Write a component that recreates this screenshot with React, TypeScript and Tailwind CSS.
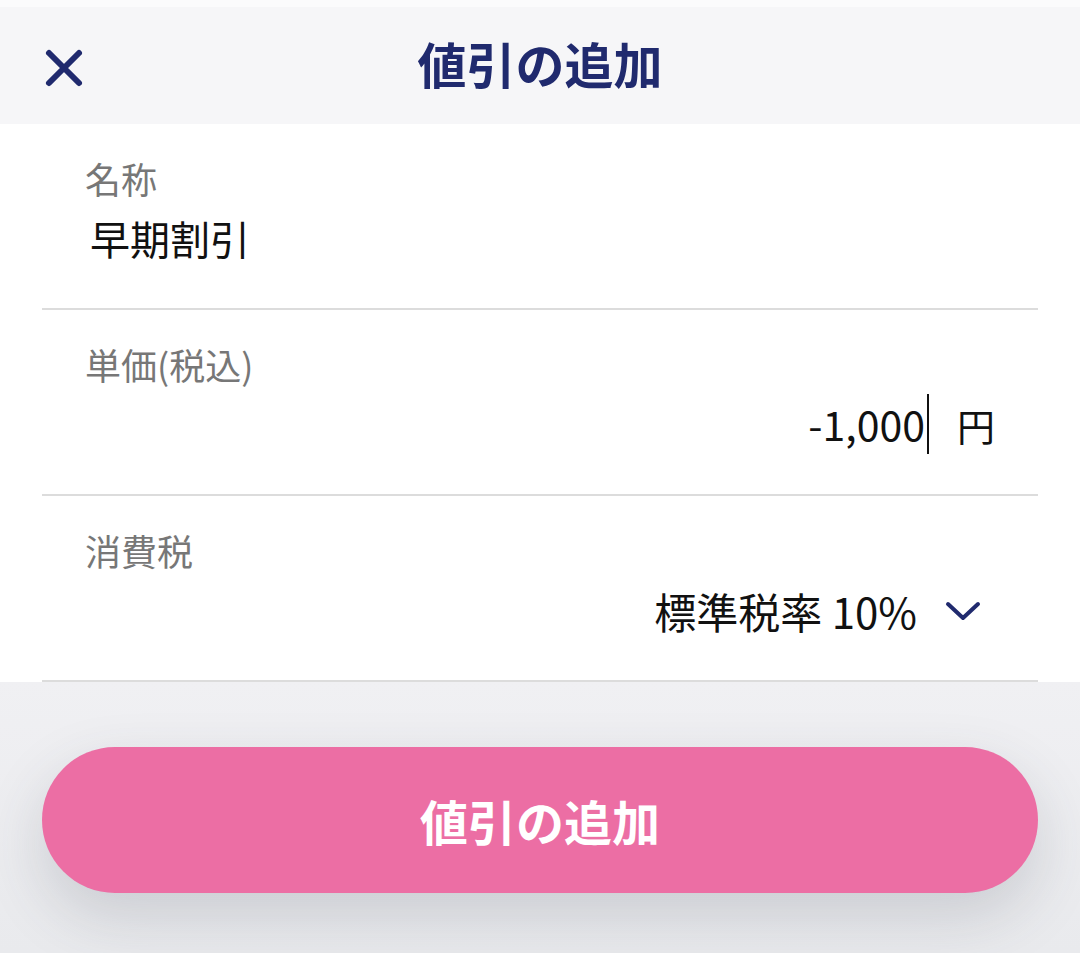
import React from 'react';

const font = { fontFamily: '"Noto Sans CJK JP", "Noto Sans", sans-serif' };

function Row({ label, children }: { label: string; children: React.ReactNode }) {
  return (
    <div className="h-[186px] border-b-2 border-[#dcdcdc] flex flex-col px-[43px] pt-[30px]">
      <div className="text-[36px] leading-[48px] text-[#777777]">{label}</div>
      <div className="mt-[8px] h-[56px] flex items-center">{children}</div>
    </div>
  );
}

export default function App() {
  return (
    <div className="w-[1080px] h-[953px] flex flex-col bg-white overflow-hidden" style={font}>
      <div className="h-[7px] bg-[#fbfbfc]" />
      <header className="h-[117px] bg-[#f6f6f8] flex items-center relative">
        <button className="absolute left-[44px] top-[41px] w-[40px] h-[40px] text-[#202a6e]">
          <svg viewBox="0 0 40 40" className="w-[40px] h-[40px]" fill="none" stroke="currentColor" strokeWidth="6" strokeLinecap="round">
            <path d="M5 5 L35 35 M35 5 L5 35" />
          </svg>
        </button>
        <h1 className="w-full text-center text-[49px] leading-none font-bold text-[#202a6e] pb-[6px]">値引の追加</h1>
      </header>

      <div className="bg-white px-[42px]">
        <Row label="名称">
          <span className="pl-[5px] text-[40px] text-[#111111]">早期割引</span>
        </Row>
        <Row label="単価(税込)">
          <div className="flex-1 flex items-center justify-end">
            <span className="text-[41px] text-[#111111]">-1,000</span>
            <span className="w-[2px] h-[60px] bg-[#111111] ml-[2px]" />
            <span className="ml-[28px] text-[38px] text-[#111111]">円</span>
          </div>
        </Row>
        <Row label="消費税">
          <div className="flex-1 flex items-center justify-end pr-[14px]">
            <span className="text-[42px] text-[#111111]">標準税率 10%</span>
            <svg viewBox="0 0 36 22" className="ml-[28px] w-[36px] h-[22px] mt-[2px]" fill="none" stroke="#202a6e" strokeWidth="4" strokeLinecap="round" strokeLinejoin="round">
              <path d="M3 4 L18 18 L33 4" />
            </svg>
          </div>
        </Row>
      </div>

      <div className="flex-1 bg-gradient-to-b from-[#f0f0f3] to-[#e9eaed] px-[42px] pt-[65px]">
        <button className="w-full h-[146px] rounded-full bg-[#ec6ea4] text-white text-[48px] font-bold shadow-[0_24px_60px_rgba(60,65,85,0.18)]">
          値引の追加
        </button>
      </div>
    </div>
  );
}
